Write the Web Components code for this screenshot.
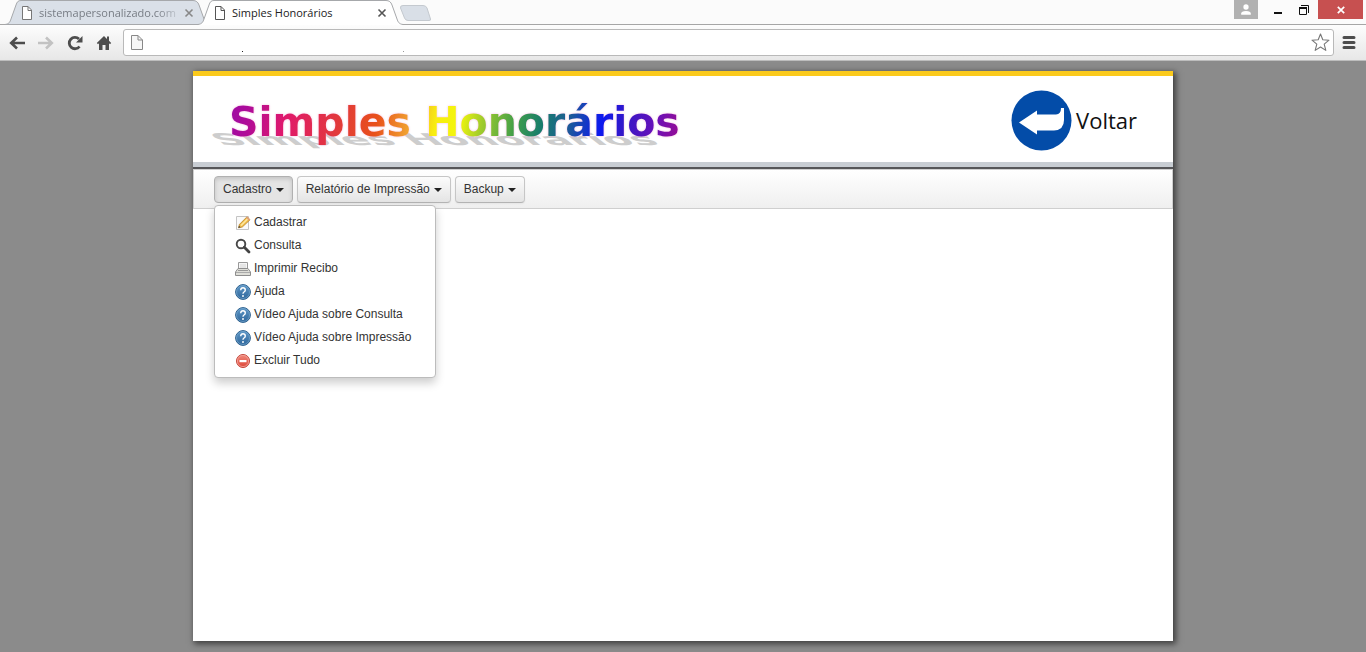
<!DOCTYPE html>
<html lang="pt-BR">
<head>
<meta charset="utf-8">
<title>Simples Honorários</title>
<style>
html, body { margin: 0; height: 100%; }
body { font-family: "Liberation Sans", Arial, sans-serif; font-size: 12px; color: #333; background: #8b8b8b; }
</style>
</head>
<body>
<browser-window>
  <browser-tab slot="tabs" label="sistemapersonalizado.com"></browser-tab>
  <browser-tab slot="tabs" label="Simples Honorários" active></browser-tab>
  <browser-toolbar slot="toolbar"></browser-toolbar>
  <site-panel>
    <site-header slot="header">
      <rainbow-logo>Simples Honorários</rainbow-logo>
      <back-link slot="action">Voltar</back-link>
    </site-header>
    <nav-bar slot="nav">
      <drop-button label="Cadastro" open>
        <menu-item icon="edit">Cadastrar</menu-item>
        <menu-item icon="search">Consulta</menu-item>
        <menu-item icon="print">Imprimir Recibo</menu-item>
        <menu-item icon="help">Ajuda</menu-item>
        <menu-item icon="help">Vídeo Ajuda sobre Consulta</menu-item>
        <menu-item icon="help">Vídeo Ajuda sobre Impressão</menu-item>
        <menu-item icon="remove">Excluir Tudo</menu-item>
      </drop-button>
      <drop-button label="Relatório de Impressão"></drop-button>
      <drop-button label="Backup"></drop-button>
    </nav-bar>
  </site-panel>
</browser-window>
<script>
const define = (name, render, setup) => customElements.define(name, class extends HTMLElement {
  connectedCallback() {
    if (this.shadowRoot) return;
    this.attachShadow({ mode: "open" }).innerHTML = render(this);
    if (setup) setup(this);
  }
});

const pageIcon = (c) => `<svg width="12" height="14" viewBox="0 0 12 14" fill="#fff" stroke="${c}" aria-hidden="true"><path d="M1.5.5H7L10.500 4V13.500H1.500Z"/><path d="M7 .5V4.500H10.500" fill="none"/></svg>`;

define("browser-window", () => `
<style>
:host { display: flex; flex-direction: column; min-height: 100%; }
.strip { display: flex; height: 25px; background: #fbfbfb; box-shadow: inset 0 -1px #a6a6a6; }
.tabs { display: flex; padding-left: 5px; flex: 1; min-width: 0; }
.new { border: 0; padding: 0; background: none; width: 34px; height: 25px; margin-left: -5px; }
svg { display: block; }
.controls { display: flex; height: 19px; padding-right: 3px; }
.controls button { border: 0; padding: 0; background: none; display: grid; place-items: center; }
.user { width: 24px; background: #b1b1b1 !important; margin-right: 8px; }
.win { width: 24px; }
.restore { width: 28px; }
.close { width: 45px; background: #c75050 !important; }
main { flex: 1; display: flex; flex-direction: column; padding: 10px 0 11px; }
</style>
<header>
  <div class="strip">
    <div class="tabs"><slot name="tabs"></slot>
      <button class="new" aria-label="Nova guia"><svg width="34" height="25" viewBox="0 0 34 25"><path d="M5 5.500H25Q28 5.500 29 8L32.500 19Q33 20.500 31 20.500H10Q7.500 20.500 6.500 18L2.500 8Q2 5.500 5 5.500Z" fill="#d9dfe7" stroke="#c4c9cf"/></svg></button>
    </div>
    <div class="controls">
      <button class="user" aria-label="Usuário"><svg width="12" height="12" viewBox="0 0 10 10" fill="#fff"><circle cx="5" cy="2.500" r="2.200"/><path d="M1 9V8Q1 5.800 5 5.800T9 8V9Z"/></svg></button>
      <button class="win" aria-label="Minimizar"><svg width="8" height="14"><path d="M0 9H8V11H0Z" fill="#111"/></svg></button>
      <button class="restore" aria-label="Restaurar"><svg width="11" height="10" viewBox="0 0 11 10" fill="none" stroke="#111"><path d="M.5 3V9.500H7.500V3"/><path d="M0 3H8" stroke-width="2"/><path d="M2 .5H9.500V8"/></svg></button>
      <button class="close" aria-label="Fechar"><svg width="8" height="8" viewBox="0 0 8 8"><path d="M.8.800 7.200 7.200M7.200.800.800 7.200" stroke="#fff" stroke-width="1.700"/></svg></button>
    </div>
  </div>
  <slot name="toolbar"></slot>
</header>
<main><slot></slot></main>`);

define("browser-tab", (el) => {
  const on = el.hasAttribute("active");
  return `
<style>
:host { display: grid; grid-template-columns: 100%; width: 205px; height: 25px; margin-right: -12px; position: relative; }
:host([active]) { z-index: 1; margin-right: 0; }
.shape, .row { grid-area: 1 / 1; }
.row { display: flex; align-items: center; padding: 0 16px; gap: 6px; height: 26px; z-index: 1; }
.row > svg { flex: none; }
a { flex: 1; min-width: 0; white-space: nowrap; font: 11px/18px "Open Sans", "Noto Sans", sans-serif; text-decoration: none; color: ${on ? "#222" : "#777c84"}; ${on ? "" : "-webkit-mask-image: linear-gradient(to right, #000 85%, rgba(0,0,0,.2)); mask-image: linear-gradient(to right, #000 85%, rgba(0,0,0,.2));"} }
button { border: 0; padding: 0; background: none; width: 10px; height: 10px; display: grid; flex: none; }
</style>
<svg class="shape" width="205" height="25" viewBox="0 0 205 25" aria-hidden="true"><path d="M0 25V24.500C4 24 5 22 6 19L11 5C12 2 13 .5 16 .5H188C191 .5 193 2 194 5L199 19C200 22 201 24 205 24.500V25Z" fill="${on ? "#fff" : "#dae0e8"}"/><path d="M0 24.500C4 24 5 22 6 19L11 5C12 2 13 .5 16 .5H188C191 .5 193 2 194 5L199 19C200 22 201 24 205 24.500${on ? "" : "H0"}" fill="none" stroke="#a6a8ab"/></svg>
<div class="row">${pageIcon(on ? "#555" : "#777")}<a href="#">${el.getAttribute("label")}</a>
<button aria-label="Fechar guia"><svg width="10" height="10" viewBox="0 0 10 10"><path d="M1.500 1.500 8.500 8.500M8.500 1.500 1.500 8.500" stroke="${on ? "#555" : "#888"}" stroke-width="1.600"/></svg></button></div>`;
});

define("browser-toolbar", () => `
<style>
:host { display: flex; align-items: center; height: 35px; padding: 0 9px; background: linear-gradient(#fdfdfd, #e7e7e7); border-bottom: 1px solid #bdbdbd; }
button { border: 0; padding: 0; background: none; display: grid; place-items: center; width: 16px; height: 16px; margin-right: 13px; flex: none; }
.address { flex: 1; display: flex; align-items: center; height: 25px; border: 1px solid #b9b9b9; border-radius: 3px; background: #fff; padding: 0 3px 0 7px; margin-right: 7px; }
.address > svg { margin-right: 4px; }
input { flex: 1; min-width: 0; height: 23px; border: 0; outline: 0; padding: 0; background:
  linear-gradient(#222, #222) 95px 20px / 1px 1px no-repeat,
  linear-gradient(#999, #999) 256px 20px / 1px 1px no-repeat; }
.address button { width: 19px; height: 19px; margin: 0; }
.address .page { flex: none; }
.menu { margin: 0; }
.home { margin-right: 11px; }
</style>
<button aria-label="Voltar"><svg width="16" height="14" viewBox="0 0 16 14" fill="none" stroke="#4d4d4d" stroke-width="2.600"><path d="M8 1.500 2.200 7 8 12.500M2.500 7H16"/></svg></button>
<button aria-label="Avançar"><svg width="16" height="14" viewBox="0 0 16 14" fill="none" stroke="#c2c2c2" stroke-width="2.600"><path d="M8 1.500 13.800 7 8 12.500M13.500 7H0"/></svg></button>
<button aria-label="Recarregar"><svg width="16" height="16" viewBox="0 0 16 16"><path d="M12.500 11.500A5.700 5.700 0 1 1 12 4" fill="none" stroke="#4d4d4d" stroke-width="2.800"/><path d="M15.500 1V7.500H9Z" fill="#4d4d4d"/></svg></button>
<button class="home" aria-label="Início"><svg width="16" height="16" viewBox="0 0 16 16" fill="#4d4d4d"><path d="M8 1 .8 8 2 9.200 3 8.300V15H6.500V10H9.500V15H13V8.300L14 9.200 15.200 8 13 5.800V1.500H11V4Z"/></svg></button>
<div class="address">
  <svg class="page" width="12" height="15" viewBox="0 0 12 15" fill="#f6f6f6" stroke="#888" aria-hidden="true"><path d="M.5.500H7L11.500 5V14.500H.500Z"/><path d="M7 .5V5H11.500" fill="none"/></svg>
  <input type="text" aria-label="Endereço">
  <button aria-label="Favoritar"><svg width="19" height="19" viewBox="0 0 19 19" fill="#fff" stroke="#777" stroke-width="1.100" stroke-linejoin="round"><path d="M9.500 1 11.800 6.800 18 7.200 13.200 11.200 14.800 17.400 9.500 14 4.200 17.400 5.800 11.200 1 7.200 7.200 6.800Z"/></svg></button>
</div>
<button class="menu" aria-label="Menu"><svg width="14" height="13" viewBox="0 0 14 13" stroke="#4d4d4d" stroke-width="3" stroke-linecap="round"><path d="M2 1.500H12M2 6.500H12M2 11.500H12"/></svg></button>`);

define("site-panel", () => `
<style>
:host { display: flex; flex-direction: column; flex: 1; width: 100%; max-width: 980px; margin: 0 auto; background: #fff; box-shadow: 2px 2px 6px 1px rgba(0,0,0,.55); }
</style>
<slot name="header"></slot><slot name="nav"></slot><slot></slot>`);

define("site-header", () => `
<style>
:host { display: block; border-top: 5px solid #fbca1c; border-bottom: 2px solid #555558; }
div { display: flex; align-items: center; justify-content: space-between; height: 86px; padding: 0 36px; border-bottom: 5px solid #c8cdd3; }
</style>
<div><slot></slot><slot name="action"></slot></div>`);

define("rainbow-logo", () => `
<style>
:host { display: block; padding-top: 6px; }
h1 { margin: 0; position: relative; font: bold 41px/48px "DejaVu Sans", Verdana, sans-serif; white-space: nowrap; isolation: isolate; }
.ink { display: block; filter: drop-shadow(0 0 1px rgba(245,170,215,.8)); }
.fill { display: block; color: transparent; -webkit-background-clip: text; background-clip: text;
  background-image: linear-gradient(100deg, #9b0aa5 0%, #b00c98 5%, #e0186c 13%, #e23a3a 25%, #e8501c 33%, #f0a030 40%, #f8ee10 46%, #f2f60c 51%, #a0cc2c 56%, #44a048 63%, #187c6c 69%, #1d5a98 75%, #0c18f0 82%, #3418c8 87%, #6a10b8 94%, #9c0c90 100%); }
h1::before { content: "Simples Honorários"; position: absolute; left: 0; top: 0; z-index: -1; color: #cdcdcd; font-size: 40px; transform-origin: 0 39px; transform: translate(-7px, 8px) skewX(52deg) scaleY(.4); }
</style>
<h1><span class="ink"><span class="fill"><slot></slot></span></span></h1>`);

define("back-link", () => `
<style>
:host { display: block; padding-top: 2px; }
a { display: flex; align-items: center; gap: 4px; color: #111; text-decoration: none; font: 22px/32px "Open Sans", "Noto Sans", sans-serif; }
svg { display: block; }
</style>
<a href="#"><svg width="61" height="61" viewBox="0 0 61 61" aria-hidden="true"><circle cx="30.500" cy="30.500" r="30" fill="#034ca8"/><path d="M8 32.500 26 20.500V24.500H45Q50 24 50 18H53V30Q53 40 43 40.500H26V44.500Z" fill="#fff"/></svg><span><slot></slot></span></a>`);

define("nav-bar", () => `
<style>
:host { display: block; }
nav { display: flex; gap: 4px; padding: 6px 20px 5px; border: 1px solid #cfcfcf; background: linear-gradient(#fff, #efefef); }
</style>
<nav><slot></slot></nav>`);

define("drop-button", (el) => `
<style>
:host { display: block; position: relative; }
button { display: flex; align-items: center; gap: 4px; height: 27px; padding: 0 8px 2px; border: 1px solid #c6c6c6; border-bottom-color: #b3b3b3; border-radius: 4px; background: linear-gradient(#fcfcfc, #e4e4e4); font: inherit; line-height: 18px; color: #333; white-space: nowrap; box-shadow: inset 0 1px rgba(255,255,255,.2), 0 1px 2px rgba(0,0,0,.05); }
button[aria-expanded="true"] { background: #e4e4e4; border-color: #b0b0b0; box-shadow: inset 0 2px 4px rgba(0,0,0,.15); }
i { border: 4px solid transparent; border-top-color: #222; border-bottom: 0; margin-top: 2px; }
ul { position: absolute; z-index: 5; top: 100%; left: 0; margin: 2px 0 0; padding: 5px 0; list-style: none; min-width: 220px; background: #fff; border: 1px solid #bcbcbc; border-radius: 4px; box-shadow: 0 5px 10px rgba(0,0,0,.2); }
ul[hidden] { display: none; }
</style>
<button type="button" aria-haspopup="true" aria-expanded="${el.hasAttribute("open")}">${el.getAttribute("label")}<i></i></button>
<ul ${el.hasAttribute("open") ? "" : "hidden"}><slot></slot></ul>`, (el) => {
  const button = el.shadowRoot.querySelector("button"), list = el.shadowRoot.querySelector("ul");
  button.addEventListener("click", () => {
    list.hidden = !list.hidden;
    button.setAttribute("aria-expanded", String(!list.hidden));
  });
});

const icons = {
  edit: `<path d="M1.500 1.500H13.500V14.500H1.500Z" fill="#fafafa" stroke="#c4c4c4"/><path d="M3.500 12.800 4.500 9.300 12 1.800 15 4.800 7.300 12Z" fill="#f3c04c" stroke="#b78226" stroke-width=".8"/><path d="M6 10.500 13 3.500" stroke="#fde9a6" stroke-width="1.200"/><path d="M11 2.800 12.300 1.500 15.200 4.400 14 5.700Z" fill="#dfa078"/><path d="M3.300 13 4 10.800 5.500 12.300Z" fill="#444"/>`,
  search: `<circle cx="6" cy="6" r="4.300" fill="none" stroke="#484848" stroke-width="1.900"/><path d="M9.300 9.300 14 14" stroke="#444" stroke-width="2.800" stroke-linecap="round"/>`,
  print: `<path d="M3.500 8V1.500H12.500V8" fill="#f6f6f6" stroke="#999"/><path d="M5 4H11M5 6H11" stroke="#d5d5d5"/><path d="M3 7.500H13L15.500 11V14.500H.500V11Z" fill="#deded8" stroke="#8e8e8e"/><path d="M1 11.500H15" stroke="#aaa"/><path d="M3 9.500H13" stroke="#999"/>`,
  help: `<circle cx="8" cy="8" r="7.400" fill="url(#g)" stroke="#2e618e"/><circle cx="8" cy="8" r="6.500" fill="none" stroke="#79a9d0" stroke-width=".7"/><path d="M5.700 6.200Q5.800 3.800 8 3.800T10.300 6Q10.300 7.200 9 8 8 8.600 8 9.800" fill="none" stroke="#fff" stroke-width="1.400"/><circle cx="8" cy="12" r=".95" fill="#fff"/>`,
  remove: `<circle cx="8" cy="8" r="6.500" fill="url(#r)" stroke="#c4453a"/><circle cx="8" cy="8" r="5.600" fill="none" stroke="#f4a79d" stroke-width=".8"/><path d="M4.500 7H11.500V9.200H4.500Z" fill="#fff"/>`
};

define("menu-item", (el) => `
<style>
:host { display: list-item; list-style: none; }
a { display: flex; align-items: center; gap: 3px; height: 23px; padding: 0 20px; line-height: 23px; color: #333; text-decoration: none; white-space: nowrap; }
a:hover { background: #eee; }
svg { flex: none; margin-top: 1px; }
</style>
<a href="#"><svg width="16" height="16" viewBox="0 0 16 16" aria-hidden="true"><defs><linearGradient id="g" x2="0" y2="1"><stop stop-color="#5f98c8"/><stop offset="1" stop-color="#2d6599"/></linearGradient><linearGradient id="r" x2="0" y2="1"><stop stop-color="#f08a7c"/><stop offset="1" stop-color="#dd4436"/></linearGradient></defs>${icons[el.getAttribute("icon")]}</svg><span><slot></slot></span></a>`);
</script>
</body>
</html>
